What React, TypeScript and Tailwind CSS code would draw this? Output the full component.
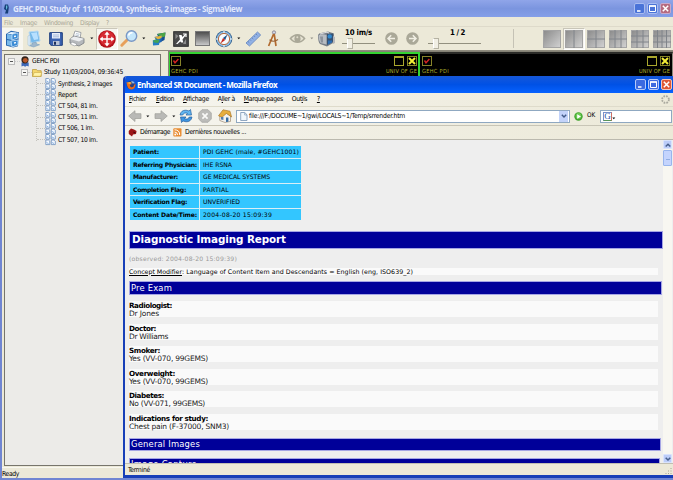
import React, { useLayoutEffect, useRef, useState } from 'react';

const UI = "font-['DejaVu_Sans_Condensed','DejaVu_Sans',sans-serif]";
const DOC = "font-['DejaVu_Sans',sans-serif]";
const TITLE = "font-['Open_Sans','DejaVu_Sans',sans-serif]";

/* A single line of text whose letter spacing is adjusted to fill a given width. */
function Fit({ w, className = '', children }: { w: number; className?: string; children: React.ReactNode }) {
  const ref = useRef<HTMLSpanElement>(null);
  const [spacing, setSpacing] = useState(0);
  useLayoutEffect(() => {
    const el = ref.current;
    if (!el) return;
    const measure = () => {
      el.style.letterSpacing = '0px';
      const natural = el.getBoundingClientRect().width;
      const n = (el.textContent || '').length;
      const next = (w - natural) / n;
      el.style.letterSpacing = `${next}px`;
      setSpacing(next);
    };
    measure();
    document.fonts.ready.then(measure);
  }, [w]);
  return (
    <span ref={ref} className={`inline-block shrink-0 whitespace-pre ${className}`} style={{ letterSpacing: `${spacing}px` }}>
      {children}
    </span>
  );
}

function Slot({ className, children }: { className: string; children?: React.ReactNode }) {
  return <div className={`flex h-[22px] shrink-0 items-center justify-center ${className}`}>{children}</div>;
}

function Svg({ w, h, children }: { w: number; h: number; children: React.ReactNode }) {
  return (
    <svg width={w} height={h} viewBox={`0 0 ${w} ${h}`} className="block shrink-0 overflow-visible">
      {children}
    </svg>
  );
}

const Drop = () => (
  <Svg w={4} h={3}><path d="M.3 .5h3L1.8 2.3z" fill="#111" /></Svg>
);

function Cabinet() {
  return (
    <Svg w={16} h={18}>
      <path d="M1 4 6 .8l8 1.5-1 14-5 1.2-7-2z" fill="#2765ad" />
      <path d="M2 4l5 1v5L2 9zM2 10l5 1v5l-5-1z" fill="#78b8ea" />
      <path d="M7 4l6-1v5l-6 2zM6 11l7-1v5l-6 2z" fill="#3b8bd4" stroke="#d4ecff" strokeWidth=".7" />
      <path d="M2 4l4-2 6 .6-5 1.6z" fill="#e6f4ff" />
      <path d="M9 6.5l2-.4M9 13l2-.4" stroke="#fff" strokeWidth="1.3" />
    </Svg>
  );
}
function Monitor() {
  return (
    <Svg w={14} h={18}>
      <path d="M2 2l9-1 2 10-9 2z" fill="#75b9ea" stroke="#b7d9f1" />
      <path d="M4 3l6-.7 1.3 7-4.3.8z" fill="#b7e0ff" />
      <path d="M5 13l4-1 .6 2 3 .8-6 2.2L2 15.5l3-.8z" fill="#9fb8cc" stroke="#6f99bb" strokeWidth=".5" />
      <path d="M1 6v9l2 1V5z" fill="#e7f2fb" stroke="#93b9d6" strokeWidth=".5" />
    </Svg>
  );
}
function Floppy() {
  return (
    <Svg w={14} h={14}>
      <path d="M.7.7h12.6v12.6H2L.7 12z" fill="#3b62b0" stroke="#1c3c7c" />
      <path d="M3 1h8v5.5H3z" fill="#e8eef9" /><path d="M4 3h6M4 4.8h6" stroke="#8aa4d0" strokeWidth=".7" />
      <path d="M4 9h6.5v4H4z" fill="#b9c3d6" /><path d="M5 9.8h2v3H5z" fill="#1d2f5d" />
    </Svg>
  );
}
function Printer() {
  return (
    <Svg w={17} h={17}>
      <path d="M4 7 6 1l6 1.5-1 6z" fill="#fdfdfd" stroke="#8b9198" strokeWidth=".8" />
      <path d="M1 9l4-3 10 2.5V13l-5 3-9-3z" fill="#b6b9bc" stroke="#777b80" strokeWidth=".8" />
      <path d="M1 9l4-2.5 10 2.3-5 2.7z" fill="#eceef0" />
      <path d="M3 12l5 2-2 2-4.5-1.8z" fill="#fff" stroke="#8c9095" strokeWidth=".6" />
      <path d="M7 3.5l3.5.8M6.5 5l3.4.8" stroke="#8ea4bc" strokeWidth=".6" />
    </Svg>
  );
}
function PanIcon() {
  return (
    <Svg w={18} h={18}>
      <circle cx="9" cy="9" r="8.8" fill="#b30f18" /><circle cx="9" cy="8.4" r="7.4" fill="#d62a32" />
      <path d="M9 3.5v11M3.5 9h11" stroke="#fff" strokeWidth="1.4" />
      <path d="M9 1.6l2.6 3.2H6.4zM9 16.4l2.6-3.2H6.4zM1.6 9l3.2-2.6v5.2zM16.4 9l-3.2-2.6v5.2z" fill="#fff" />
    </Svg>
  );
}
function Loupe() {
  return (
    <Svg w={18} h={17}>
      <path d="M7 10 1.8 15.2" stroke="#e7a05a" strokeWidth="3" strokeLinecap="round" />
      <circle cx="11.5" cy="6" r="5.2" fill="#c5e7fb" stroke="#7a98c5" strokeWidth="1.4" />
      <path d="M8.5 5.5q1-3 4-2.7" stroke="#fff" strokeWidth="1.6" fill="none" />
    </Svg>
  );
}
function Layers() {
  return (
    <Svg w={14} h={14}>
      <path d="M5 2l8.5-1.5-1 7.5-4 2z" fill="#174f93" />
      <path d="M5 2l8.5-1.5-.5 4-3.5 1z" fill="#4ea544" />
      <path d="M2.5 5l7.5-1.5-.5 6.5-4 1.5z" fill="#2068b7" />
      <path d="M2.5 5 10 3.5 9.5 6 6 7.5z" fill="#e3b338" />
      <path d="M.8 8.2l7.2-1-1 5.8-6 .6z" fill="#267fc4" />
      <path d="M1 9q3-2.5 6.5-.5L6 11 2 10.6z" fill="#43a356" />
    </Svg>
  );
}
function Contrast() {
  return (
    <Svg w={16} h={16}>
      <rect x=".7" y=".7" width="14.6" height="14.6" fill="#4a4a4a" stroke="#2c2c2c" />
      <path d="M3 13 7 8.5 6 4h2.5l1 2L12 3h1.5L9.5 8.5l.8 3h-2l-1-1L4.5 13z" fill="#fff" />
      <path d="M2.5 3v5l3-3zM13 8v5h-3z" fill="#8b8b8b" />
      <path d="M10 3h3v3" fill="none" stroke="#fff" strokeWidth="1.2" />
    </Svg>
  );
}
function CompassIcon() {
  return (
    <Svg w={18} h={18}>
      <circle cx="9" cy="9" r="8.3" fill="#35618f" /><circle cx="9" cy="9" r="7.4" fill="#8bbbe2" />
      <circle cx="9" cy="9" r="5.6" fill="#f7fbff" stroke="#b55d29" strokeWidth=".9" />
      <path d="M12.5 4.5 10.2 10 8 8z" fill="#1c568f" /><path d="M5.5 13.5 8 8l2.2 2z" fill="#c72b23" />
      <path d="M9 1v2M9 15v2M1 9h2M15 9h2" stroke="#fff" />
    </Svg>
  );
}
function Ruler() {
  return (
    <Svg w={17} h={16}>
      <path d="M1 12 12.5 1l3.2 3L4.5 15z" fill="#91b1e5" stroke="#6283bd" strokeWidth=".8" />
      <path d="M3 10.5l1.3 1.2M5 8.6l1 1M7 6.8l1.3 1.2M9 4.9l1 1M11 3l1.3 1.2" stroke="#496a9f" strokeWidth=".6" />
    </Svg>
  );
}
function Dividers() {
  return (
    <Svg w={12} h={18}>
      <circle cx="7" cy="2.4" r="1.6" fill="#d4d7e3" stroke="#7d7889" strokeWidth=".8" />
      <path d="M6.6 4 1.6 16M7.2 4l1.8 12" stroke="#b26a2e" strokeWidth="1.7" />
      <path d="M2.5 9.8q4 3 8.5-.2" stroke="#9a6031" strokeWidth="1.2" fill="none" />
    </Svg>
  );
}
function Eye() {
  return (
    <Svg w={17} h={11}>
      <path d="M.4 5.5Q4 1 8.5 1t8.1 4.5Q13 10 8.5 10T.4 5.5z" fill="#aaa898" />
      <path d="M2.5 5.5Q4 3.5 6 2.9 4.8 5.5 6 8.1 4 7.5 2.5 5.5zM14.5 5.5Q13 3.5 11 2.9q1.2 2.6 0 5.2 2-.6 3.5-2.6z" fill="#e5e2d2" />
      <circle cx="8.3" cy="4.3" r="1" fill="#dedbca" />
    </Svg>
  );
}
function Camera() {
  return (
    <Svg w={19} h={16}>
      <path d="M1 4q1-2 3-2l7-1.5 6 2v9l-7 4-7-2.5q-2-2-2-9z" fill="#777e87" />
      <path d="M1.5 4.5q3-2 8-.5v9.5L3.5 12q-2-3-2-7.5z" fill="#b7bcc2" /><path d="M3 5.5h3v6H4z" fill="#8b929b" />
      <path d="M10 3l6-.5v8L10 14z" fill="#35506f" /><circle cx="12.8" cy="5.4" r="2.2" fill="#3189ce" />
      <path d="M11 9.5h4v2l-4 2z" fill="#2a6cb3" /><path d="M16 5l2 1v6l-2 1z" fill="#b7b8bb" /><path d="M3 3l7-1.8 2 .8" stroke="#dedfe2" fill="none" />
    </Svg>
  );
}
function NavCircle({ right = false }: { right?: boolean }) {
  return (
    <Svg w={13} h={13}>
      <circle cx="6.5" cy="6.5" r="6.3" fill="#aaa898" />
      <path d={right ? 'M3 6.5h7M6.8 3.2 10 6.5 6.8 9.8' : 'M10 6.5H3M6.2 3.2 3 6.5l3.2 3.3'} stroke="#f1efe4" strokeWidth="1.5" fill="none" />
    </Svg>
  );
}

function LayoutButton({ v, h, active = false }: { v: number[]; h: number[]; active?: boolean }) {
  return (
    <div className={`flex h-[22px] w-[22px] shrink-0 items-center justify-center ${active ? 'border border-white border-t-[#c8c5b8] border-l-[#c8c5b8] bg-[#f7f6f1]' : ''}`}>
      <Svg w={18} h={18}>
        <defs>
          <linearGradient id="pane" x1="0" y1="0" x2="1" y2="1"><stop stopColor="#8a8a8a" /><stop offset="1" stopColor="#d2d2d2" /></linearGradient>
        </defs>
        <rect x=".5" y=".5" width="17" height="17" fill="url(#pane)" stroke="#a4a4a4" />
        {v.map((x) => <path key={`v${x}`} d={`M${x} 0v18`} stroke="#80848a" />)}
        {h.map((y) => <path key={`h${y}`} d={`M0 ${y}h18`} stroke="#80848a" />)}
      </Svg>
    </div>
  );
}

function Slider({ className, line, label, labelClass, w }: { className: string; line: string; label: string; labelClass: string; w: number }) {
  return (
    <div className={`flex h-[22px] shrink-0 flex-col ${className}`}>
      <div className={`flex h-[10px] items-center pt-px text-[7.8px] font-bold leading-[10px] text-black ${UI} ${labelClass}`}>
        <Fit w={w}>{label}</Fit>
      </div>
      <div className="flex h-[11px] items-center">
        <div className="h-px w-[5px] bg-[#92907f]" />
        <div className="h-[11px] w-[6px] border border-[#b5b2a2] border-l-white bg-[#f1efe4]" />
        <div className={`h-px bg-[#92907f] ${line}`} />
      </div>
    </div>
  );
}

function CaptionButtons({ faded = false }: { faded?: boolean }) {
  const blue = faded ? 'bg-[#4a73d8] border-[#a9bcf0]' : 'bg-[#3c6ae0] border-[#b5c9fa]';
  const red = faded ? 'bg-[#b56a7f] border-[#c9a9ca]' : 'bg-[#de5835] border-[#f3c5bb]';
  const box = 'flex h-[11px] w-[11px] items-center justify-center rounded-[2px] border';
  return (
    <div className="flex gap-[2px]">
      <div className={`${box} ${blue}`}><Svg w={9} h={9}><path d="M2 7h3.5" stroke="#fff" strokeWidth="1.6" /></Svg></div>
      <div className={`${box} ${blue}`}><Svg w={9} h={9}><path d="M1.5 2h6v5.5h-6z" stroke="#fff" fill="none" /><path d="M1 2h7" stroke="#fff" strokeWidth="1.6" /></Svg></div>
      <div className={`${box} ${red}`}><Svg w={9} h={9}><path d="M1.8 1.8 7.2 7.2M7.2 1.8 1.8 7.2" stroke="#fff" strokeWidth="1.5" /></Svg></div>
    </div>
  );
}

function ImagePages() {
  return (
    <Svg w={11} h={11}>
      <g fill="#f4f9ff" stroke="#6a8ebd" strokeWidth=".8">
        <path d="M.8.5h2.8l1.2 1.2v3.4h-4zM6.3.5h2.8l1.2 1.2v3.4h-4zM.8 6h2.8L4.8 7.2v3.4h-4zM6.3 6h2.8l1.2 1.2v3.4h-4z" />
      </g>
      <path d="M1.5 3l2 1M7 3l2 1M1.5 8.5l2 1M7 8.5l2 1" stroke="#8db5e4" />
    </Svg>
  );
}

const Minus = () => (
  <div className="flex h-[7px] w-[7px] shrink-0 items-center justify-center border border-[#bbb] bg-[#f6f6f4]"><div className="h-px w-[3px] bg-[#555]" /></div>
);

const series: [string, number][] = [
  ['Synthesis, 2 images', 54], ['Report', 19], ['CT 504, 81 im.', 39.5], ['CT 505, 11 im.', 39.5], ['CT 506, 1 im.', 36], ['CT 507, 10 im.', 39.5],
];

function Tree() {
  return (
    <div className={`h-[412px] w-[157px] shrink-0 border border-[#77756c] bg-[#ecebe8] text-[6.7px] text-black ${UI}`}>
      <div className="flex h-[12px] items-center pl-[3px]">
        <Minus /><div className="w-[5px] border-t border-dotted border-[#ccc]" />
        <Svg w={10} h={11}>
          <path d="M1.5 6.5h7.2v4l-2-.7-1.6 1-1.6-1-2 .7z" fill="#3d68b8" />
          <circle cx="5" cy="3.8" r="3.6" fill="#312219" /><circle cx="5.3" cy="4.3" r="2.4" fill="#b85829" />
        </Svg>
        <Fit w={27} className="ml-[2px]">GEHC PDI</Fit>
      </div>
      <div className="flex h-[11px] items-center pl-[16px]">
        <Minus /><div className="w-[4px] border-t border-dotted border-[#ccc]" />
        <Svg w={10} h={9}>
          <path d="M.5 1.5h4l1 1.2h3.7v5.8H.5z" fill="#f4d66b" stroke="#b49330" strokeWidth=".7" />
          <path d="M2.2 4.5h7.6L8.6 8.3H.8z" fill="#fff2a5" stroke="#c3a13c" strokeWidth=".5" />
        </Svg>
        <Fit w={79} className="ml-[2px]">Study 11/03/2004, 09:36:45</Fit>
      </div>
      <div className="ml-[31px] h-[63px] border-l border-dotted border-[#c5c4be]">
        {series.map(([s, w]) => (
          <div key={s} className="flex h-[11.2px] items-center">
            <div className="w-[8px] border-t border-dotted border-[#c5c4be]" /><ImagePages />
            <div className={`ml-px flex h-[10px] items-center px-px ${s === 'Report' ? 'bg-[#ece9d8]' : ''}`}><Fit w={w}>{s}</Fit></div>
          </div>
        ))}
      </div>
    </div>
  );
}

function Viewport({ className }: { className: string }) {
  return (
    <div className={`h-[120px] overflow-hidden bg-black text-[5.6px] leading-[7px] text-[#b2b22c] ${UI} ${className}`}>
      <div className="flex justify-between pt-[2px]">
        <div className="flex h-[10px] w-[10px] items-center justify-center border border-[#87832a]"><Svg w={6} h={6}><path d="M.5 2.5 2 4.8 5.4 1" stroke="#d62323" strokeWidth="1.4" fill="none" /></Svg></div>
        <div className="flex gap-[3px]">
          <div className="h-[10px] w-[10px] border border-t-2 border-[#aaa72d]" />
          <div className="flex h-[10px] w-[10px] items-center justify-center border border-[#858327]"><Svg w={8} h={8}><path d="M1 1l6 6M7 1 1 7" stroke="#f3ed35" strokeWidth="2" /></Svg></div>
        </div>
      </div>
      <div className="mt-[2px] flex justify-between"><Fit w={27}>GEHC PDI</Fit><Fit w={31}>UNIV OF GE</Fit></div>
      <div className="flex justify-between"><Fit w={16}>4/89:</Fit><Fit w={34}>ID: GEHC1001</Fit></div>
    </div>
  );
}

const facts: [string, number, string, number][] = [
  ['Patient:', 26, 'PDI GEHC (male, #GEHC1001)', 96],
  ['Referring Physician:', 64, 'IHE RSNA', 29],
  ['Manufacturer:', 45, 'GE MEDICAL SYSTEMS', 67],
  ['Completion Flag:', 53, 'PARTIAL', 26],
  ['Verification Flag:', 54, 'UNVERIFIED', 37],
  ['Content Date/Time:', 64, '2004-08-20 15:09:39', 69],
];

const findings: [string, number, string, number][] = [
  ['Radiologist:', 43, 'Dr Jones', 30],
  ['Doctor:', 27, 'Dr Williams', 39],
  ['Smoker:', 31, 'Yes (VV-070, 99GEMS)', 79],
  ['Overweight:', 46, 'Yes (VV-070, 99GEMS)', 79],
  ['Diabetes:', 35, 'No (VV-071, 99GEMS)', 76],
  ['Indications for study:', 79, 'Chest pain (F-37000, SNM3)', 100],
];

const BAR = 'flex shrink-0 items-center border border-[#a5a5e4] bg-[#000099] text-white';

function Report() {
  return (
    <div className={`flex h-[323px] flex-col overflow-hidden bg-[#eeeeee] ${DOC}`}>
      <div className="flex">
        <div className="h-[323px] w-[538px] shrink-0 overflow-hidden pl-[4px]">
          <div className="mt-[6px] ml-px flex h-[74px] w-[171px] flex-col gap-px bg-[#d9eef6] text-[6.1px] leading-[9px] text-black">
            {facts.map(([k, kw, v, vw]) => (
              <div key={k} className="flex min-h-0 flex-1 gap-px">
                <div className="flex w-[69px] items-center bg-[#33c6ff] pl-[3px] font-bold"><Fit w={kw}>{k}</Fit></div>
                <div className="flex flex-1 items-center bg-[#33c6ff] pl-[3px]"><Fit w={vw}>{v}</Fit></div>
              </div>
            ))}
          </div>
          <div className={`mt-[11px] h-[18px] w-[534px] pl-[2px] text-[10.4px] font-bold ${BAR}`}><Fit w={154}>Diagnostic Imaging Report</Fit></div>
          <div className="mt-[5px] flex h-[9px] items-center text-[6.1px] text-[#999]"><Fit w={108}>(observed: 2004-08-20 15:09:39)</Fit></div>
          <div className="mt-[5px] flex h-[7px] w-[529px] items-center bg-[#fafafa] text-[6.3px] text-black">
            <Fit w={53} className="underline">Concept Modifier</Fit><Fit w={231}>: Language of Content Item and Descendants = English (eng, ISO639_2)</Fit>
          </div>
          <div className={`mt-[6px] h-[14px] w-[533px] pl-px text-[8.4px] ${BAR}`}><Fit w={41}>Pre Exam</Fit></div>
          <div className="mt-[6px] flex flex-col gap-[6.5px] text-[7.5px] leading-[8px] text-black">
            {findings.map(([k, kw, v, vw]) => (
              <div key={k} className="flex h-[16px] w-[529px] flex-col bg-[#fafafa] pt-px">
                <div className="flex h-[8px] shrink-0 items-center text-[7.2px] font-bold"><Fit w={kw}>{k}</Fit></div>
                <div className="flex h-[8px] shrink-0 items-center text-[#222]"><Fit w={vw}>{v}</Fit></div>
              </div>
            ))}
          </div>
          <div className={`mt-[8px] h-[13px] w-[532px] pl-px text-[8.4px] ${BAR}`}><Fit w={69}>General Images</Fit></div>
          <div className={`mt-[7px] h-[14px] w-[531px] pl-px text-[8.4px] ${BAR}`}><Fit w={66}>Image Capture</Fit></div>
        </div>
        <div className="flex h-[323px] w-[9px] shrink-0 flex-col justify-between bg-[#f8f7f1]">
          <div>
            <div className="flex h-[9px] items-center justify-center rounded-[1px] border border-[#d9e3fc] bg-[#bccdf9]"><Svg w={6} h={4}><path d="M.7 3.5 3 1.2l2.3 2.3" stroke="#48608d" strokeWidth="1.5" fill="none" /></Svg></div>
            <div className="mt-px flex h-[16px] items-center justify-center rounded-[1px] border border-[#98b5ed] bg-[#c4d4fd]"><div className="h-[3px] w-[4px] border-b border-[#91aee2]" /></div>
          </div>
          <div className="flex h-[9px] items-center justify-center rounded-[1px] border border-[#d9e3fc] bg-[#bccdf9]"><Svg w={6} h={4}><path d="M.7.7 3 3 5.3.7" stroke="#48608d" strokeWidth="1.5" fill="none" /></Svg></div>
        </div>
      </div>
    </div>
  );
}

function Firefox() {
  const menus: [string, string, string, number, string][] = [
    ['', 'F', 'ichier', 17, 'ml-[4px]'], ['', 'E', 'dition', 18, 'ml-[10px]'], ['', 'A', 'ffichage', 26, 'ml-[9px]'],
    ['A', 'l', 'ler à', 17, 'ml-[9px]'], ['', 'M', 'arque-pages', 39, 'ml-[9px]'], ['Out', 'i', 'ls', 15, 'ml-[9px]'], ['', '?', '', 3, 'ml-[10px]'],
  ];
  return (
    <div className="absolute left-[121px] top-[76px] h-[402px] w-[550px] overflow-hidden rounded-tl-[4px] border-b-[3px] border-l-2 border-[#173fb8] bg-[#ece9d8]">
      <div className="flex h-[17px] items-center bg-linear-to-b from-[#1557d8] via-[#0051e5] to-[#0762ff] pl-px pr-px">
        <Svg w={10} h={10}>
          <circle cx="5" cy="5" r="4.3" fill="#243f85" /><path d="M.5 2Q1 9.7 5.5 9.5 9.8 9 9.5 3.5L8 5Q8 7.5 5.3 7.2 3.3 6.5 4 4.8L6 4Z" fill="#e96a18" /><path d="M1 3q3-2 5 0L4 4z" fill="#f8b444" /><path d="M5 .7q3 0 4 2.5L6.5 3.5z" fill="#8db6e0" />
        </Svg>
        <Fit w={140} className={`ml-px pt-px text-[8.1px] font-bold leading-[12px] text-white ${TITLE}`}>Enhanced SR Document - Mozilla Firefox</Fit>
        <div className="ml-auto"><CaptionButtons /></div>
      </div>
      <div className={`flex h-[13px] items-center bg-linear-to-r from-[#f6f5ef] to-[#ece9d8] text-[6.8px] text-black ${UI}`}>
        {menus.map(([a, b, c, w, m]) => <Fit key={b} w={w} className={m}>{a}<span className="underline">{b}</span>{c}</Fit>)}
        <div className="ml-auto mr-[3px]"><Svg w={9} h={9}><circle cx="4.5" cy="4.5" r="3.4" fill="none" stroke="#aaa99f" strokeWidth="1.8" strokeDasharray="1.7 1" /></Svg></div>
      </div>
      <div className="flex h-[20px] items-center border-t border-b border-t-[#dedbcb] border-b-[#c8c5b6] bg-linear-to-r from-[#f6f5ef] to-[#ece9d8] pl-[3px]">
        <Svg w={14} h={12}><path d="M.7 6 7 .7v3h6v4.8H7v3z" fill="#b9b9b6" stroke="#9d9d9a" strokeWidth=".7" /></Svg>
        <div className="ml-[4px]"><Drop /></div>
        <div className="ml-[4px]"><Svg w={14} h={12}><path d="M13.3 6 7 .7v3H1v4.8h6v3z" fill="#b9b9b6" stroke="#9d9d9a" strokeWidth=".7" /></Svg></div>
        <div className="ml-[4px]"><Drop /></div>
        <div className="ml-[3px]"><Svg w={14} h={14}>
          <path d="M1 6Q2 1 7 1.2L10 2l1.5-1.5 1 5.5H7l1.5-1.7Q5 3 3.7 6z" fill="#61b6f1" stroke="#245d9d" strokeWidth=".7" />
          <path d="M13 8q-1 5-6 4.8L4 12l-1.5 1.5-1-5.5H7L5.5 9.7Q9 11 10.3 8z" fill="#3e95e1" stroke="#245d9d" strokeWidth=".7" />
        </Svg></div>
        <div className="ml-[5px]"><Svg w={14} h={14}><path d="M4 .7h6l3.3 3.3v6L10 13.3H4L.7 10V4z" fill="#bcbcb9" stroke="#a0a09d" strokeWidth=".7" /><path d="M4.4 4.4l5.2 5.2M9.6 4.4 4.4 9.6" stroke="#fafaf8" strokeWidth="1.7" /></Svg></div>
        <div className="ml-[6px]"><Svg w={14} h={14}>
          <path d="M1.8 6.5 7 3l5.5 4v5.4L7 13.5l-5.2-2z" fill="#f4f2ed" stroke="#8e7960" strokeWidth=".6" />
          <path d="M.5 6.8 5 .8l7 1.4L13.6 8 8.4 4.4 4 8.3z" fill="#e7ae3e" stroke="#a36d22" strokeWidth=".6" />
          <path d="M3 8h2.4v3L3 10.5z" fill="#547cab" /><path d="M8 8.5h2.4v4.3L8 13z" fill="#376da3" />
        </Svg></div>
        <div className={`ml-[4px] flex h-[13px] w-[334px] shrink-0 items-center border border-[#8fa8c1] bg-white pr-px text-[6.8px] text-black ${UI}`}>
          <div className="ml-[3px]"><Svg w={8} h={9}><path d="M.7.5h4L7 2.7v5.8H.7z" fill="#f1f7fd" stroke="#7793b2" strokeWidth=".8" /><path d="M4.6.6V3H7" fill="none" stroke="#7793b2" strokeWidth=".6" /></Svg></div>
          <Fit w={156} className="ml-px">file:///F:/DOCUME~1/gwi/LOCALS~1/Temp/srrender.htm</Fit>
          <div className="ml-auto flex h-[11px] w-[9px] items-center justify-center bg-[#c3d3fa]"><Svg w={6} h={4}><path d="M.8.7 3 3 5.2.7" stroke="#405987" strokeWidth="1.4" fill="none" /></Svg></div>
        </div>
        <div className="ml-[4px]"><Svg w={9} h={9}><circle cx="4.5" cy="4.5" r="4.2" fill="#42a52f" /><circle cx="4.5" cy="4" r="2.9" fill="#6dcc54" /><path d="M3.2 2.2 7 4.5 3.2 6.8z" fill="#fff" /></Svg></div>
        <Fit w={8} className={`ml-[4px] text-[6.4px] text-black ${UI}`}>OK</Fit>
        <div className="ml-[5px] flex h-[13px] w-[72px] items-center border border-[#8fa8c1] bg-white pl-[2px]">
          <div className="flex h-[9px] w-[9px] items-center justify-center border border-t-[#7892ca] border-r-[#cf6d61] border-b-[#59965a] border-l-[#7892ca] font-['Liberation_Serif',serif] text-[9px] leading-[8px] text-[#2352aa]">G</div><div className="self-end pb-[2px]"><Drop /></div>
        </div>
      </div>
      <div className={`flex h-[14px] items-center border-b border-[#bbb9ae] bg-linear-to-r from-[#f4f3ec] to-[#ece9d8] pl-[3px] text-[6.8px] text-black ${UI}`}>
        <Svg w={9} h={9}><path d="M.7 3 3 .6l3 .8L8.6 3 8 6 5 6.5 4 8.5.8 6z" fill="#9c1717" /><path d="M5 3.5l3 1-2 1z" fill="#4a0c0c" /></Svg>
        <Fit w={30} className="ml-[3px]">Démarrage</Fit>
        <div className="ml-[3px]"><Svg w={9} h={9}><rect x=".3" y=".3" width="8.2" height="8.2" rx="1" fill="#e98e34" /><circle cx="2.2" cy="6.5" r=".9" fill="#fff" /><path d="M1.5 4q3 0 3 3M1.5 1.8Q6.7 1.8 6.7 7" fill="none" stroke="#fff" /></Svg></div>
        <Fit w={61} className="ml-[3px]">Dernières nouvelles ...</Fit>
      </div>
      <Report />
      <div className={`flex h-[12px] items-center border-t border-[#c0beb2] bg-[#ece9d8] pl-[3px] pt-px text-[6.8px] leading-[9px] text-black ${UI}`}>
        <Fit w={22}>Terminé</Fit>
        <div className="ml-auto mr-px"><Svg w={7} h={7}><path d="M6 1v1M3.5 3.5v1M6 3.5v1M1 6v1M3.5 6v1M6 6v1" stroke="#aaa795" /></Svg></div>
      </div>
    </div>
  );
}

export default function App() {
  const menus: [string, number, string][] = [['File', 9, 'ml-[2px]'], ['Image', 17, 'ml-[7px]'], ['Windowing', 29, 'ml-[7px]'], ['Display', 19, 'ml-[7px]'], ['?', 3, 'ml-[7px]']];
  return (
    <div className="relative flex h-[480px] w-[673px] flex-col overflow-hidden border-b-2 border-l-2 border-[#7186d2] bg-[#ece9d8]">
      <div className="flex h-[17px] shrink-0 items-center bg-linear-to-b from-[#90a5e9] via-[#7b95df] to-[#859fe8] pr-[2px]">
        <Svg w={9} h={10}><path d="M3 .5h3l.8 3L6 9.5H3l1-3L2 5z" fill="#163e77" /><path d="M4 1.5h1.3V4L4 6z" fill="#65b9d8" /></Svg>
        <Fit w={229} className={`ml-[2px] pt-px text-[8.1px] font-bold leading-[12px] text-[#e1e8fc] ${TITLE}`}>GEHC PDI,Study of  11/03/2004, Synthesis, 2 images - SigmaView</Fit>
        <div className="ml-auto"><CaptionButtons faded /></div>
      </div>
      <div className={`flex h-[10px] shrink-0 items-center border-b border-[#dedaca] pt-[2px] text-[6.6px] leading-[8px] text-[#aaa797] ${UI}`}>
        {menus.map(([s, w, m]) => <Fit key={s} w={w} className={m}>{s}</Fit>)}
      </div>
      <div className="flex h-[24px] shrink-0 items-center border-b border-[#8e8b7e]">
        <Slot className="w-[21px] bg-[#f7f6f0]"><Cabinet /></Slot>
        <Slot className="w-[21px]"><Monitor /></Slot>
        <Slot className="w-[23px]"><Floppy /></Slot>
        <Slot className="w-[21px]"><Printer /></Slot>
        <Slot className="w-[8px]"><Drop /></Slot>
        <Slot className="w-[22px] border border-t-[#cac7b9] border-r-white border-b-white border-l-[#cac7b9] bg-[#f7f6f0]"><PanIcon /></Slot>
        <Slot className="w-[22px]"><Loupe /></Slot>
        <Slot className="w-[8px]"><Drop /></Slot>
        <Slot className="w-[22px]"><Layers /></Slot>
        <Slot className="w-[22px]"><Contrast /></Slot>
        <Slot className="w-[21px]"><div className="h-[15px] w-[15px] border border-[#777] bg-linear-to-b from-[#4f4f4f] to-[#c8c8c8]" /></Slot>
        <Slot className="w-[22px]"><CompassIcon /></Slot>
        <Slot className="w-[8px]"><Drop /></Slot>
        <Slot className="w-[20px]"><Ruler /></Slot>
        <Slot className="w-[20px]"><Dividers /></Slot>
        <Slot className="ml-[3px] w-[22px]"><Eye /></Slot>
        <Slot className="w-[8px] opacity-40"><Drop /></Slot>
        <Slot className="w-[20px]"><Camera /></Slot>
        <Slider className="ml-[6px] w-[34px]" line="w-[22px]" label="10 im/s" labelClass="pl-[3px]" w={27} />
        <Slot className="ml-[4px] w-[22px]"><NavCircle /></Slot>
        <Slot className="w-[21px]"><NavCircle right /></Slot>
        <Slider className="ml-[5px] w-[53px]" line="w-[42px]" label="1 / 2" labelClass="pl-[22px]" w={15} />
        <div className="ml-[32px] mr-[27px] h-[19px] w-px bg-[#c5c2b5]" />
        <LayoutButton v={[]} h={[]} />
        <LayoutButton v={[9]} h={[]} active />
        <LayoutButton v={[9]} h={[9]} />
        <LayoutButton v={[6, 12]} h={[9]} />
        <LayoutButton v={[6, 12]} h={[6, 12]} />
        <LayoutButton v={[4.5, 9, 13.5]} h={[6, 12]} />
      </div>
      <div className="flex h-[416px] shrink-0 items-start">
        <div className="w-[166px] shrink-0 pl-[2px] pt-[3px]"><Tree /></div>
        <div className="flex h-[416px] grow border-l border-t border-[#858276] bg-black">
          <Viewport className="w-[251px] border border-t-2 border-r-2 border-[#35d332] pl-[1px] pr-[1px]" />
          <Viewport className="grow border-t-2 border-r border-t-[#2b2b28] border-r-[#8c8a7e] pl-[2px] pr-[2px]" />
        </div>
      </div>
      <div className={`flex h-[11px] shrink-0 items-center border-t border-[#f8f7f0] pt-[2px] text-[6.8px] leading-[8px] text-black ${UI}`}><Fit w={17}>Ready</Fit></div>
      <Firefox />
    </div>
  );
}
